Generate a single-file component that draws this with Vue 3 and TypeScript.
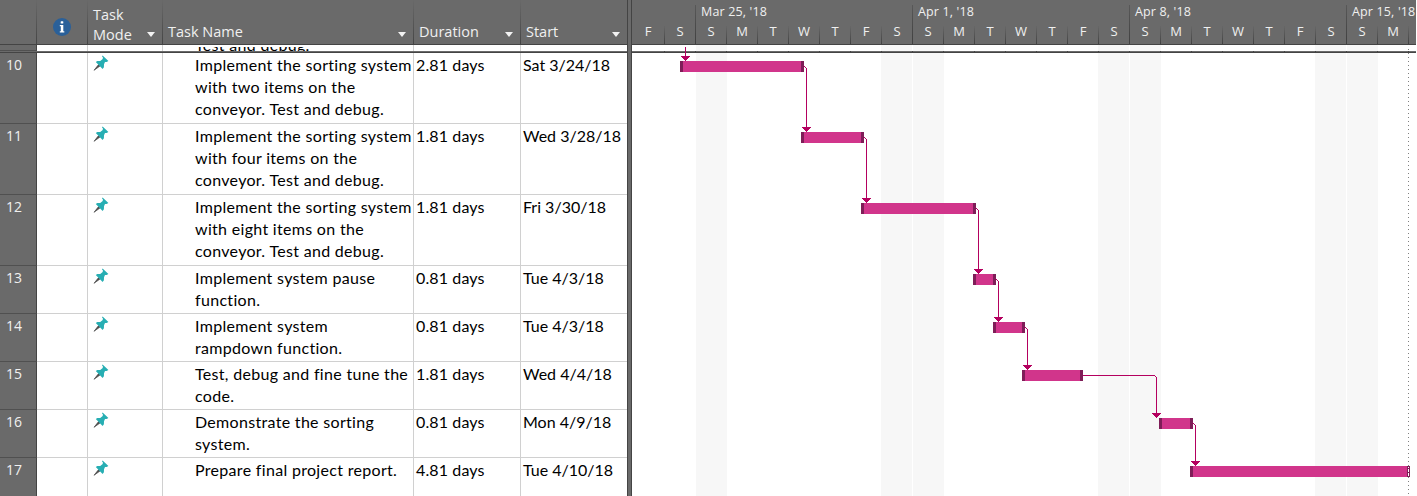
<script setup lang="ts">
interface Task {
  id: number
  lines: string[]
  duration: string
  start: string
  height: number
}

interface Bar {
  x: number
  end: number
  y: number
}

interface Link {
  path: string
  x: number
  y: number
}

const tasks: Task[] = [
  { id: 10, lines: ['Implement the sorting system', 'with two items on the', 'conveyor. Test and debug.'], duration: '2.81 days', start: 'Sat 3/24/18', height: 71 },
  { id: 11, lines: ['Implement the sorting system', 'with four items on the', 'conveyor. Test and debug.'], duration: '1.81 days', start: 'Wed 3/28/18', height: 71 },
  { id: 12, lines: ['Implement the sorting system', 'with eight items on the', 'conveyor. Test and debug.'], duration: '1.81 days', start: 'Fri 3/30/18', height: 71 },
  { id: 13, lines: ['Implement system pause', 'function.'], duration: '0.81 days', start: 'Tue 4/3/18', height: 48 },
  { id: 14, lines: ['Implement system', 'rampdown function.'], duration: '0.81 days', start: 'Tue 4/3/18', height: 48 },
  { id: 15, lines: ['Test, debug and fine tune the', 'code.'], duration: '1.81 days', start: 'Wed 4/4/18', height: 48 },
  { id: 16, lines: ['Demonstrate the sorting', 'system.'], duration: '0.81 days', start: 'Mon 4/9/18', height: 48 },
  { id: 17, lines: ['Prepare final project report.'], duration: '4.81 days', start: 'Tue 4/10/18', height: 48 },
]

const weeks: { label: string; days: string[] }[] = [
  { label: '', days: ['F', 'S'] },
  { label: "Mar 25, '18", days: ['S', 'M', 'T', 'W', 'T', 'F', 'S'] },
  { label: "Apr 1, '18", days: ['S', 'M', 'T', 'W', 'T', 'F', 'S'] },
  { label: "Apr 8, '18", days: ['S', 'M', 'T', 'W', 'T', 'F', 'S'] },
  { label: "Apr 15, '18", days: ['S', 'M', ''] },
]

// Chart coordinates start at the right edge of the splitter, under the timescale.
const OX = 632
const OY = 45
const weekends = [696, 881, 913, 1098, 1130, 1315, 1347].map((x) => x - OX)
const ticks = Array.from({ length: 25 }, (_, i) => 664 + i * 31 - OX)

const bars: Bar[] = [
  { x: 680, end: 804, y: 61 },
  { x: 801, end: 864, y: 132 },
  { x: 861, end: 976, y: 203 },
  { x: 973, end: 996, y: 274 },
  { x: 993, end: 1025, y: 322 },
  { x: 1022, end: 1083, y: 370 },
  { x: 1159, end: 1193, y: 418 },
  { x: 1190, end: 1410, y: 466 },
].map((b) => ({ x: b.x - OX, end: b.end - OX, y: b.y - OY }))

const links: Link[] = [{ path: 'M53.5 2V12', x: 53, y: 11 }]
for (let i = 0; i < bars.length - 1; i++) {
  const from = bars[i]
  const to = bars[i + 1]
  const x = i === 5 ? 1156 - OX : from.end + 2
  const y = from.y + 5
  links.push({
    path: `M${from.end} ${y + 0.5}H${x - 1}M${x - 1} ${y + 1.5}H${x}M${x + 0.5} ${y + 2}V${to.y - 4}`,
    x,
    y: to.y - 5,
  })
}
</script>

<template>
  <div class="project">
    <section class="sheet">
      <header class="head">
        <div class="h gut"></div>
        <div class="h info">
          <svg width="18" height="18" viewBox="0 0 18 18">
            <circle cx="9" cy="9" r="9" fill="#2a6099" />
            <rect x="7.7" y="3.2" width="2.6" height="2.4" rx=".6" fill="#fff" />
            <path d="M6.8 7h3.5v6.2h1v1.2H6.8v-1.2h1V8.2h-1z" fill="#fff" />
          </svg>
        </div>
        <div class="h mode"><span>Task<br />Mode</span><i class="caret"></i></div>
        <div class="h name"><span>Task Name</span><i class="caret"></i></div>
        <div class="h dur"><span>Duration</span><i class="caret"></i></div>
        <div class="h start"><span>Start</span><i class="caret"></i></div>
      </header>
      <div class="sliver">
        <div class="c gut"></div>
        <div class="c info"></div>
        <div class="c mode"></div>
        <div class="c name"><div class="clip"><p>Test and debug.</p></div></div>
        <div class="c dur"></div>
        <div class="c start"></div>
      </div>
      <div class="freeze"></div>
      <div v-for="t in tasks" :key="t.id" class="row" :style="{ height: t.height + 'px' }">
        <div class="c gut">{{ t.id }}</div>
        <div class="c info"></div>
        <div class="c mode">
          <svg width="16" height="16" viewBox="0 0 16 16">
            <path d="M1 15.3L5.6 9.6L7 11z" fill="#4b4b4b" stroke="#4b4b4b" stroke-width=".7" />
            <path d="M9.6.6L15.4 6L13.6 6.9L12 6.9L11 9.2L10.9 12.2L9.6 14L2.8 7.1L4.3 6L7.2 6L9.7 4L9.9 2.3L9 1.5z" fill="#27aeb3" />
          </svg>
        </div>
        <div class="c name"><p v-for="l in t.lines" :key="l">{{ l }}</p></div>
        <div class="c dur">{{ t.duration }}</div>
        <div class="c start">{{ t.start }}</div>
      </div>
    </section>
    <div class="splitter"></div>
    <section class="gantt">
      <header class="scale">
        <div v-for="(w, i) in weeks" :key="i" class="week" :class="{ first: i === 0 }">
          <div class="date">{{ w.label }}</div>
          <div class="days"><span v-for="(d, j) in w.days" :key="j">{{ d }}</span></div>
        </div>
      </header>
      <svg class="chart" width="784" height="451" shape-rendering="crispEdges">
        <rect v-for="x in weekends" :key="x" :x="x" y="0" width="31" height="451" fill="#f7f7f7" />
        <rect x="0" y="6" width="784" height="1" fill="#6a6a6a" />
        <rect x="0" y="7" width="784" height="1" fill="#444" />
        <rect v-for="x in ticks" :key="'t' + x" :x="x" y="6" width="1" height="1" fill="#444" />
        <path d="M776.5 4V451" stroke="#808080" stroke-dasharray="1 3" />
        <g v-for="(l, i) in links" :key="'l' + i">
          <path :d="l.path" stroke="#b4005f" fill="none" />
          <path :d="`M${l.x - 4} ${l.y}h9v1h-1v1h-1v1h-1v1h-1v1h-1v-1h-1v-1h-1v-1h-1v-1h-1z`" fill="#b4005f" />
        </g>
        <g v-for="(b, i) in bars" :key="'b' + i">
          <rect :x="b.x" :y="b.y" :width="b.end - b.x" height="11" fill="#7f1d58" />
          <rect :x="b.x + 3" :y="b.y" :width="b.end - b.x - 6" height="11" fill="#d1358b" />
        </g>
        <path d="M776.5 422V423M776.5 424V427M776.5 428V431" stroke="#fff" />
      </svg>
    </section>
  </div>
</template>

<style>
body {
  margin: 0;
  overflow: hidden;
}
</style>

<style scoped>
.project {
  display: flex;
  width: 1417px;
  height: 496px;
  overflow: hidden;
  background: #fff;
  font-family: Lato, 'Liberation Sans', sans-serif;
  font-size: 16px;
  line-height: 22px;
  font-variant-ligatures: none;
  color: #000;
}
.sheet {
  width: 627px;
  flex: none;
}
.head,
.sliver,
.row {
  display: flex;
}
.gut { width: 37px; }
.info { width: 51px; }
.mode { width: 75px; }
.name { width: 251px; }
.dur { width: 107px; }
.start { width: 106px; }
.h,
.c {
  box-sizing: border-box;
  flex: none;
}
.head {
  height: 45px;
  box-sizing: border-box;
  border-bottom: 1px solid #444;
  background: #6a6a6a;
  color: #f0f0f0;
  font-family: 'Open Sans', 'Noto Sans', sans-serif;
  font-size: 14.5px;
  line-height: 20px;
}
.h {
  display: flex;
  justify-content: space-between;
  align-items: flex-end;
  padding: 0 7px 2px 5px;
  border-right: 1px solid;
  border-image: linear-gradient(#6a6a6a, #444) 1;
}
.h.mode {
  padding-bottom: 0;
}
.h.mode span {
  margin-bottom: -1px;
}
.h.mode .caret {
  margin-bottom: 7px;
}
.h.start {
  border-right: 0;
}
.h.info {
  padding: 0 0 8px 16px;
}
.caret {
  width: 0;
  height: 0;
  margin-bottom: 5px;
  border: 4.5px solid transparent;
  border-top: 5px solid #f2f2f2;
  border-bottom: 0;
}
.sliver {
  height: 6px;
  overflow: hidden;
}
.clip {
  height: 4px;
  overflow: hidden;
}
.clip p {
  margin-top: -13px;
}
.freeze {
  height: 2px;
  box-sizing: border-box;
  background: #6a6a6a;
  border-bottom: 1px solid #444;
}
.c {
  border-right: 1px solid #d0d0d0;
  border-bottom: 1px solid #d0d0d0;
  padding: 1px 0 0 2px;
  white-space: nowrap;
}
.c.dur {
  letter-spacing: 0.13px;
}
.sliver .c {
  border-bottom: 0;
}
.sliver .c.name {
  padding-top: 2px;
}
.c.gut {
  background: #6a6a6a;
  border-right: 1px solid #444;
  border-bottom: 1px solid #505050;
  padding-left: 6px;
  padding-top: 1px;
  color: #f0f0f0;
  font-family: 'Open Sans', 'Noto Sans', sans-serif;
  font-size: 14px;
}
.c.name {
  padding-left: 32px;
  letter-spacing: 0.31px;
}
.c.start {
  border-right: 0;
}
.c.mode {
  padding: 2px 0 0 5px;
}
.c svg,
.h svg {
  display: block;
}
p {
  margin: 0;
}
.splitter {
  box-sizing: border-box;
  width: 5px;
  flex: none;
  background: #6a6a6a;
  border: solid #444;
  border-width: 0 1px;
}
.gantt {
  width: 784px;
  flex: none;
  overflow: hidden;
}
.scale {
  display: flex;
  height: 45px;
  box-sizing: border-box;
  border-bottom: 1px solid #444;
  background: #6a6a6a;
  color: #f0f0f0;
  font-family: 'Open Sans', 'Noto Sans', sans-serif;
  font-size: 13px;
}
.week {
  flex: none;
  width: 217px;
}
.week.first {
  width: 64px;
}
.date {
  box-sizing: border-box;
  height: 26px;
  padding-left: 5px;
  line-height: 24px;
  font-size: 12.5px;
  letter-spacing: 0.15px;
  white-space: nowrap;
}
.week:not(.first) .date {
  position: relative;
}
.week:not(.first) .date::before {
  content: '';
  position: absolute;
  left: -1px;
  top: 5px;
  width: 1px;
  height: 39px;
  background: linear-gradient(#585858, #404040);
}
.days {
  display: flex;
}
.days span {
  box-sizing: border-box;
  flex: none;
  width: 31px;
  height: 18px;
  line-height: 11px;
  text-align: center;
  border-right: 1px solid;
  border-image: linear-gradient(#6a6a6a, #404040) 1;
}
.first .days span:first-child {
  width: 33px;
}
.chart {
  display: block;
}
</style>
